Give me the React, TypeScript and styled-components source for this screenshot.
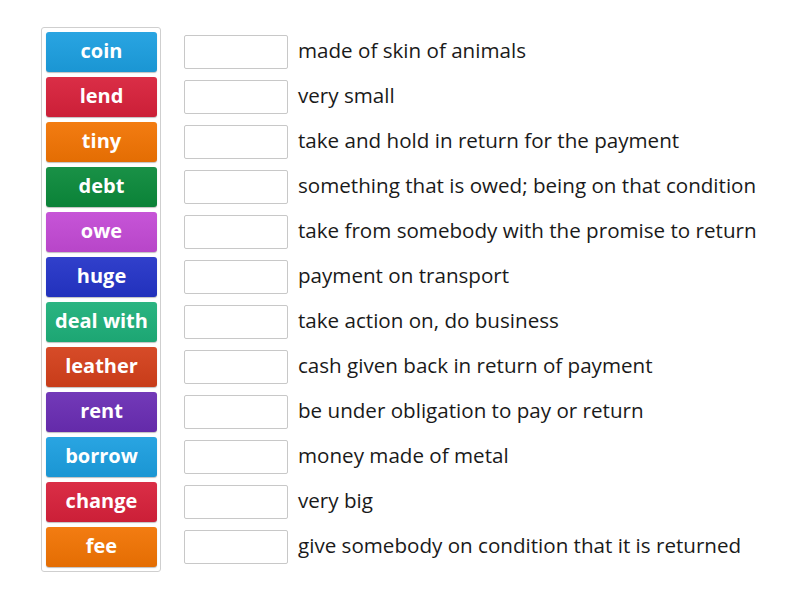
import React from 'react';
import styled, { createGlobalStyle } from 'styled-components';

const GlobalStyle = createGlobalStyle`
  body {
    margin: 0;
    background: #ffffff;
    font-family: "Open Sans", "Liberation Sans", sans-serif;
  }
`;

interface Word {
  label: string;
  color: string;
}

const words: Word[] = [
  { label: 'coin', color: '#1c9fe0' },
  { label: 'lend', color: '#d8213b' },
  { label: 'tiny', color: '#f27403' },
  { label: 'debt', color: '#0b8a3b' },
  { label: 'owe', color: '#c34ad5' },
  { label: 'huge', color: '#2434c8' },
  { label: 'deal with', color: '#1eb07a' },
  { label: 'leather', color: '#d4401b' },
  { label: 'rent', color: '#6a2db4' },
  { label: 'borrow', color: '#1c9fe0' },
  { label: 'change', color: '#d8213b' },
  { label: 'fee', color: '#f27403' },
];

const definitions = [
  'made of skin of animals',
  'very small',
  'take and hold in return for the payment',
  'something that is owed; being on that condition',
  'take from somebody with the promise to return',
  'payment on transport',
  'take action on, do business',
  'cash given back in return of payment',
  'be under obligation to pay or return',
  'money made of metal',
  'very big',
  'give somebody on condition that it is returned',
];

export default function App() {
  return (
    <>
      <GlobalStyle />
      <Page>
        <TileBox>
          {words.map((w) => (
            <Tile key={w.label} color={w.color}>
              {w.label}
            </Tile>
          ))}
        </TileBox>
        <Targets>
          {definitions.map((d) => (
            <TargetRow key={d}>
              <DropSlot />
              <Definition>{d}</Definition>
            </TargetRow>
          ))}
        </Targets>
      </Page>
    </>
  );
}

const Page = styled.div`
  display: flex;
  align-items: flex-start;
  padding: 27px 0 0 41px;
`;

const TileBox = styled.div`
  display: flex;
  flex-direction: column;
  gap: 5px;
  padding: 4px 3px 4px 4px;
  border: 1px solid #cfcfcf;
  border-radius: 3px;
  background: #fff;
`;

const Tile = styled.div<{ color: string }>`
  width: 111px;
  height: 40px;
  display: flex;
  align-items: center;
  justify-content: center;
  border-radius: 3px;
  background: ${(p) => p.color};
  background-image: linear-gradient(rgba(255, 255, 255, 0.06), rgba(0, 0, 0, 0.06));
  box-shadow: 0 1px 1px rgba(0, 0, 0, 0.25);
  color: #fff;
  font-size: 20px;
  font-weight: 700;
  line-height: 1;
  padding-bottom: 2px;
  box-sizing: border-box;
`;

const Targets = styled.div`
  display: flex;
  flex-direction: column;
  gap: 5px;
  padding-top: 5px;
  margin-left: 23px;
`;

const TargetRow = styled.div`
  height: 40px;
  display: flex;
  align-items: center;
`;

const DropSlot = styled.div`
  width: 104px;
  height: 34px;
  box-sizing: border-box;
  border: 1px solid #c8c8c8;
  border-radius: 2px;
  background: #fff;
  flex-shrink: 0;
`;

const Definition = styled.span`
  margin-left: 10px;
  font-size: 20.6px;
  color: #1a1a1a;
  white-space: nowrap;
  padding-bottom: 5px;
`;
